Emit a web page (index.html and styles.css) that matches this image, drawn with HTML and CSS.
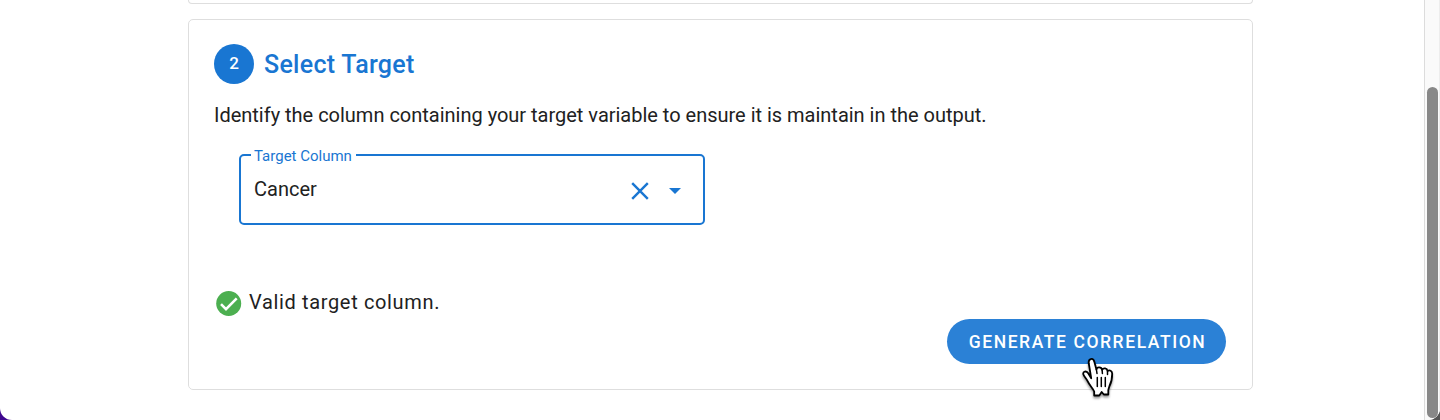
FILE: index.html
```html
<!DOCTYPE html>
<html lang="en">
<head>
<meta charset="utf-8">
<title>Select Target</title>
<link rel="stylesheet" href="styles.css">
</head>
<body>
<div class="window">
  <main class="content">
    <section class="card card-previous"></section>
    <section class="card card-target">
      <header class="step-header">
        <span class="step-number">2</span>
        <h2 class="step-title">Select Target</h2>
      </header>
      <p class="description">Identify the column containing your target variable to ensure it is maintain in the output.</p>
      <fieldset class="select-field">
        <legend class="select-label">Target Column</legend>
        <div class="select-row">
          <span class="select-value">Cancer</span>
          <svg class="icon-clear" width="18" height="18" viewBox="0 0 18 18"><path d="M1.2 1.2 16.8 16.8M16.8 1.2 1.2 16.8"/></svg>
          <svg class="icon-caret" width="12" height="6" viewBox="0 0 12 6"><path d="M0 0h12L6 6z"/></svg>
        </div>
      </fieldset>
      <div class="status">
        <svg class="icon-check" width="26" height="26" viewBox="0 0 26 26"><circle cx="12.7" cy="13.5" r="12.5"/><path d="M5 14.1 10 19.1 20.7 8.4"/></svg>
        <span class="status-text">Valid target column.</span>
      </div>
      <div class="actions">
        <button class="generate" type="button">GENERATE CORRELATION</button>
      </div>
    </section>
  </main>
  <div class="scrollbar"><div class="thumb"></div></div>
</div>
<svg class="cursor" width="36" height="44" viewBox="0 0 36 44">
  <path class="hand" d="M10.2 23.2 7.8 8.5C7.1 3.3 12.2 2.3 13.4 7L15.4 14.5C16 11.7 20.4 11.7 21.1 14.9C22.4 12.4 26.1 13 26.5 16C28.6 14.5 31.2 15.8 31.2 18.8C31.2 23.2 30.6 27.2 28.4 31.3L27.3 35V39.5H22.8L20.7 37L18.3 40.5H13.2V36.5C11.7 33 8.5 30.4 6.6 26.2C5.8 24 3.2 21.8 2.3 19.3C1.7 16.2 5.2 15.5 7.2 18.3Z"/>
  <path class="creases" d="M16.3 22.5V31.5M20.3 22.5V31.5M24.3 22.5V31.5M15.4 14.5 16 18.5M21.1 14.9 21.4 18.5M26.5 16V19.5"/>
</svg>
</body>
</html>
```

FILE: styles.css
```css
* { box-sizing: border-box; }

body {
  margin: 0;
  height: 420px;
  overflow: hidden;
  background: linear-gradient(90deg, #3f078f 50%, #555 50%);
  font-family: Roboto, "Liberation Sans", sans-serif;
  color: #212121;
}

.window {
  display: flex;
  height: 420px;
  background: #fff;
  border-radius: 0 0 12px 12px;
  overflow: hidden;
}

.content {
  flex: 1;
  display: flex;
  flex-direction: column;
  gap: 15px;
  padding-left: 188px;
}

.card {
  width: 1065px;
  border: 1px solid #dedede;
  border-radius: 5px;
}

.card-previous {
  height: 4px;
  border-top: 0;
  border-radius: 0 0 5px 5px;
}

.card-target {
  height: 371px;
  padding: 24px 26px 0 25px;
}

.step-header {
  display: flex;
  align-items: center;
  gap: 10px;
  height: 40px;
}

.step-number {
  width: 40px;
  height: 40px;
  border-radius: 50%;
  background: #1976d2;
  color: #fff;
  font-size: 17px;
  font-weight: 500;
  line-height: 39px;
  text-align: center;
}

.step-title {
  margin: 0;
  color: #1976d2;
  font-size: 25px;
  font-weight: 500;
  letter-spacing: 0.28px;
  line-height: 40px;
  padding-top: 2px;
}

.description {
  margin: 16px 0 0;
  font-size: 20px;
  letter-spacing: -0.01px;
  line-height: 30px;
  white-space: nowrap;
}

.select-field {
  width: 466px;
  height: 79px;
  margin: 16px 0 0 25px;
  padding: 0;
  border: 2px solid #1976d2;
  border-radius: 5px;
}

.select-label {
  height: 18px;
  margin-left: 10px;
  padding: 0 4px 0 3px;
  color: #1976d2;
  font-size: 15px;
  line-height: 20px;
}

.select-row {
  display: flex;
  align-items: center;
  padding: 9px 22px 0 13px;
  height: 41px;
}

.select-value {
  flex: 1;
  font-size: 20px;
  line-height: 30px;
}

.icon-clear {
  margin: 3px 20px 0 0;
  fill: none;
  stroke: #1976d2;
  stroke-width: 2.4;
}

.icon-caret {
  margin-top: 3px;
  fill: #1976d2;
}

.status {
  display: flex;
  align-items: center;
  gap: 7px;
  height: 30px;
  margin: 63px 0 0 2px;
}

.icon-check circle { fill: #4caf50; }

.icon-check path {
  fill: none;
  stroke: #fff;
  stroke-width: 2.6;
}

.status-text {
  padding-bottom: 2px;
  font-size: 20px;
  letter-spacing: 0.65px;
  line-height: 30px;
}

.actions {
  display: flex;
  justify-content: flex-end;
  margin-top: 1px;
}

.generate {
  width: 279px;
  height: 45px;
  padding: 2px 0 0 2px;
  border: 0;
  border-radius: 23px;
  background: #2b81d6;
  color: #fff;
  font: 500 17.5px/43px Roboto, "Liberation Sans", sans-serif;
  letter-spacing: 1.57px;
}

.scrollbar {
  width: 16px;
  padding: 87px 2px 2px;
  border-left: 1px solid #dcdcdc;
  border-right: 1px solid #ededed;
  background: #fafafa;
}

.thumb {
  width: 11px;
  height: 331px;
  border-radius: 6px;
  background: #888;
}

.cursor {
  position: absolute;
  left: 1081px;
  top: 355px;
  filter: drop-shadow(0 2px 1px rgba(0, 0, 0, 0.4));
}

.hand {
  fill: #fff;
  stroke: #000;
  stroke-width: 1.8;
  stroke-linejoin: round;
}

.creases {
  fill: none;
  stroke: #000;
  stroke-width: 1.5;
  stroke-linecap: round;
}
```
